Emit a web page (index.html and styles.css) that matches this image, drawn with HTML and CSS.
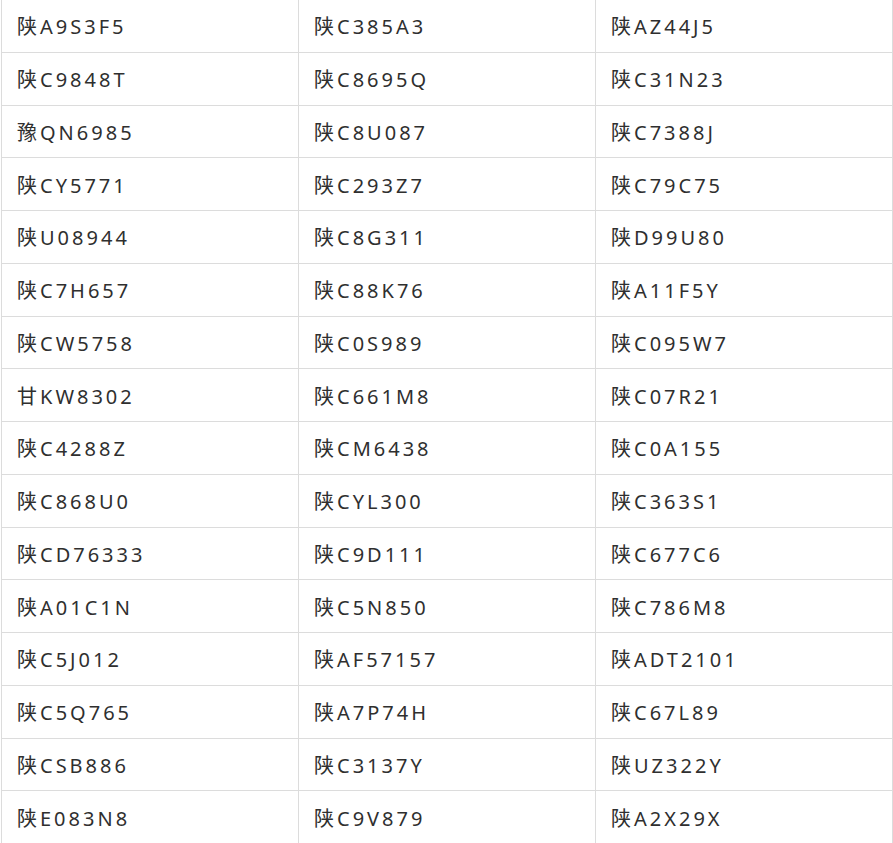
FILE: index.html
```html
<!DOCTYPE html>
<html lang="zh-CN">
<head>
<meta charset="utf-8">
<title>车牌列表</title>
<link rel="stylesheet" href="styles.css">
</head>
<body>
<div class="plates">
  <div class="cell">陕A9S3F5</div><div class="cell">陕C385A3</div><div class="cell">陕AZ44J5</div>
  <div class="cell">陕C9848T</div><div class="cell">陕C8695Q</div><div class="cell">陕C31N23</div>
  <div class="cell">豫QN6985</div><div class="cell">陕C8U087</div><div class="cell">陕C7388J</div>
  <div class="cell">陕CY5771</div><div class="cell">陕C293Z7</div><div class="cell">陕C79C75</div>
  <div class="cell">陕U08944</div><div class="cell">陕C8G311</div><div class="cell">陕D99U80</div>
  <div class="cell">陕C7H657</div><div class="cell">陕C88K76</div><div class="cell">陕A11F5Y</div>
  <div class="cell">陕CW5758</div><div class="cell">陕C0S989</div><div class="cell">陕C095W7</div>
  <div class="cell">甘KW8302</div><div class="cell">陕C661M8</div><div class="cell">陕C07R21</div>
  <div class="cell">陕C4288Z</div><div class="cell">陕CM6438</div><div class="cell">陕C0A155</div>
  <div class="cell">陕C868U0</div><div class="cell">陕CYL300</div><div class="cell">陕C363S1</div>
  <div class="cell">陕CD76333</div><div class="cell">陕C9D111</div><div class="cell">陕C677C6</div>
  <div class="cell">陕A01C1N</div><div class="cell">陕C5N850</div><div class="cell">陕C786M8</div>
  <div class="cell">陕C5J012</div><div class="cell">陕AF57157</div><div class="cell">陕ADT2101</div>
  <div class="cell">陕C5Q765</div><div class="cell">陕A7P74H</div><div class="cell">陕C67L89</div>
  <div class="cell">陕CSB886</div><div class="cell">陕C3137Y</div><div class="cell">陕UZ322Y</div>
  <div class="cell">陕E083N8</div><div class="cell">陕C9V879</div><div class="cell">陕A2X29X</div>
</div>
</body>
</html>
```
FILE: styles.css
```css
html, body {
  margin: 0;
  padding: 0;
  background: #ffffff;
  overflow: hidden;
}

.plates {
  display: grid;
  grid-template-columns: repeat(3, 297px);
  grid-auto-rows: 52.75px;
  margin-left: 1px;
  border-left: 1px solid #dcdcdc;
  width: 891px;
}

.cell {
  box-sizing: border-box;
  display: flex;
  align-items: center;
  padding: 3px 0 0 15px;
  border-right: 1px solid #dcdcdc;
  border-bottom: 1px solid #dcdcdc;
  font-family: "Noto Sans", "Noto Sans CJK SC", sans-serif;
  font-size: 20px;
  line-height: 28px;
  letter-spacing: 3px;
  color: #2f2f2f;
}
```
